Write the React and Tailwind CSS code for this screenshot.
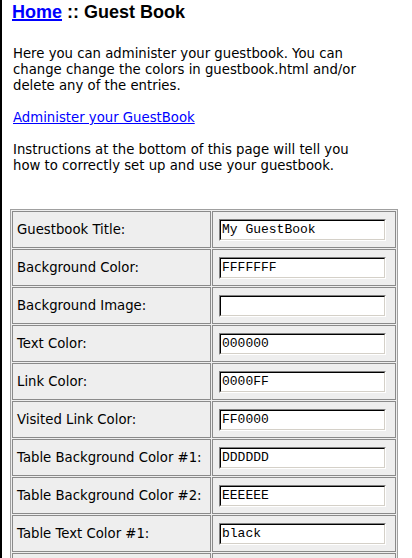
const rows = [
  ["Guestbook Title:", "My GuestBook"],
  ["Background Color:", "FFFFFFF"],
  ["Background Image:", ""],
  ["Text Color:", "000000"],
  ["Link Color:", "0000FF"],
  ["Visited Link Color:", "FF0000"],
  ["Table Background Color #1:", "DDDDDD"],
  ["Table Background Color #2:", "EEEEEE"],
  ["Table Text Color #1:", "black"],
  ["Table Text Color #2:", "black"],
];

function Field({ value }) {
  return (
    <span className="block w-[167px] border border-t-[#808080] border-l-[#808080] border-r-white border-b-white">
      <input
        readOnly
        value={value}
        className="block w-full h-[20px] border border-t-black border-l-black border-r-[#d4d0c8] border-b-[#d4d0c8] bg-white px-px text-[13px] leading-[16px] text-black font-['Liberation_Mono',monospace] outline-none"
      />
    </span>
  );
}

export default function App() {
  return (
    <div className="min-h-[558px] bg-white border-l-2 border-black font-['DejaVu_Sans',sans-serif] text-[13.25px] leading-[16px] text-black">
      <h1 className="pl-[10px] pt-[2px] font-['Liberation_Sans',Arial,sans-serif] text-[18px] leading-[21px] font-bold">
        <a href="#" className="text-[#0000ff] underline decoration-2">
          Home
        </a>{" "}
        :: Guest Book
      </h1>

      <div className="pl-[11px]">
        <p className="mt-[23px]">
          Here you can administer your guestbook. You can
          <br />
          change change the colors in guestbook.html and/or
          <br />
          delete any of the entries.
        </p>
        <p className="mt-[16px]">
          <a href="#" className="text-[#0000ff] underline">
            Administer your GuestBook
          </a>
        </p>
        <p className="mt-[16px]">
          Instructions at the bottom of this page will tell you
          <br />
          how to correctly set up and use your guestbook.
        </p>
      </div>

      <div className="ml-[8px] mt-[35px] w-[388px] border border-[#a0a0a0] bg-[#eeeeee] p-px">
        <div className="grid grid-cols-[199px_1fr] gap-px">
          {rows.map(([label, value]) => (
            <div key={label} className="contents">
              <div className="h-[37px] flex items-center border border-[#8a8a8a] bg-[#eeeeee] pl-[4px]">
                {label}
              </div>
              <div className="h-[37px] flex items-center border border-[#8a8a8a] bg-[#eeeeee] pl-[6px]">
                <Field value={value} />
              </div>
            </div>
          ))}
        </div>
      </div>
    </div>
  );
}
